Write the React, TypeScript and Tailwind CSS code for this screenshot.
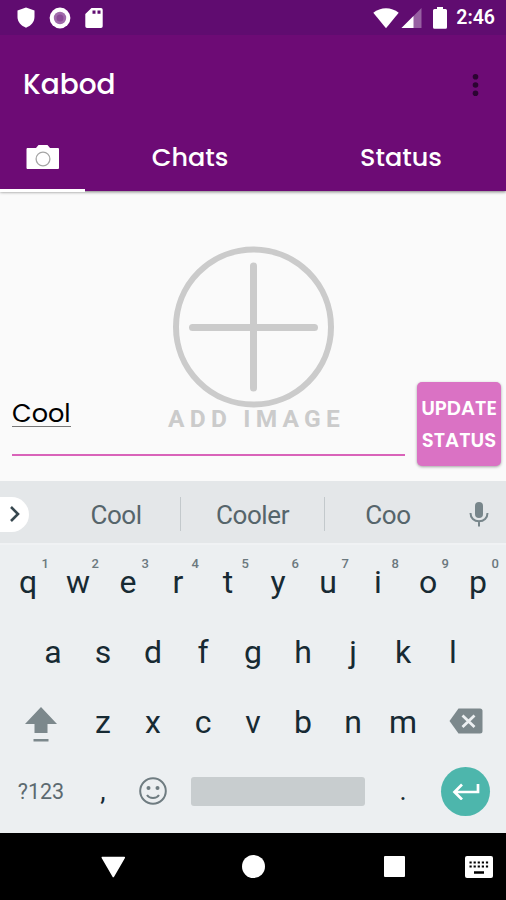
import React from "react";
import clsx from "clsx";

const TOP_ROW = ["q", "w", "e", "r", "t", "y", "u", "i", "o", "p"];
const HOME_ROW = ["a", "s", "d", "f", "g", "h", "j", "k", "l"];
const BOTTOM_ROW = ["z", "x", "c", "v", "b", "n", "m"];

function StatusBar() {
  return (
    <div className="flex h-[35px] items-center justify-between bg-[#600c70] pl-[16px] pr-[11px] text-white">
      <div className="flex items-center gap-[13px]">
        <svg width="20" height="22" viewBox="0 0 20 22" fill="currentColor">
          <path d="M10 .5 18.500 3.500V10c0 5-3.500 8.700-8.500 10.700C5 18.700 1.500 15 1.500 10V3.500z" />
        </svg>
        <svg width="22" height="22" viewBox="0 0 22 22">
          <circle cx="11" cy="11" r="10.4" fill="white" />
          <circle cx="11" cy="11" r="6.200" fill="#a06bab" />
          <circle cx="11" cy="11" r="3.500" fill="#8b4b97" />
        </svg>
        <svg className="ml-px" width="18" height="22" viewBox="0 0 18 22">
          <path d="M6.5 1H16a1.7 1.7 0 0 1 1.7 1.7v16.6A1.7 1.7 0 0 1 16 21H2a1.7 1.7 0 0 1-1.7-1.7V7z" fill="white" />
          <path d="M7.500 3.500h3v3.2h-3zM12.500 3.500h3v3.2h-3z" fill="#600c70" />
        </svg>
      </div>
      <div className="flex items-center">
        <svg width="26" height="22" viewBox="0 0 26 22" fill="currentColor">
          <path d="M.3 5.800C7.500-.3 18.500-.3 25.700 5.800L13 21.300z" />
        </svg>
        <svg className="ml-[2px]" width="21" height="22" viewBox="0 0 21 22" fill="currentColor">
          <path d="M20.500 1v20H.5z" opacity=".35" />
          <path d="M12.500 9v12H.5z" />
        </svg>
        <svg className="ml-[11px]" width="14" height="22" viewBox="0 0 14 22" fill="currentColor">
          <path d="M4 0h6v2h2.500A1.500 1.500 0 0 1 14 3.500v16.800a1.500 1.500 0 0 1-1.500 1.500h-11A1.500 1.500 0 0 1 0 20.300V3.500A1.500 1.500 0 0 1 1.500 2H4z" />
        </svg>
        <span className="ml-[9px] pt-[1px] font-[Roboto,sans-serif] text-[19.500px] font-semibold leading-none">2:46</span>
      </div>
    </div>
  );
}

function Header() {
  return (
    <header className="relative z-10 h-[191px] bg-[#6d0b75] text-white shadow-[0_1px_3px_rgba(0,0,0,0.5)]">
      <StatusBar />
      <div className="flex h-[99px] items-center justify-between pl-[23px] pr-[27px]">
        <h1 className="text-[28px] font-medium leading-none">Kabod</h1>
        <svg width="7" height="24" viewBox="0 0 7 24" fill="#2b0431">
          <circle cx="3.500" cy="3.700" r="2.800" />
          <circle cx="3.500" cy="12" r="2.800" />
          <circle cx="3.500" cy="20.300" r="2.800" />
        </svg>
      </div>
      <nav className="flex h-[58px] text-[25.500px] font-medium leading-none">
        <div className="flex w-[85px] flex-col items-center border-b-[3px] border-white pt-[10px]">
          <svg width="34" height="26" viewBox="0 0 34 26">
            <path d="M1 4h9l2.500-3h9L24 4h8a1 1 0 0 1 1 1v19a1 1 0 0 1-1 1H1.500a1 1 0 0 1-1-1V5z" fill="white" />
            <circle cx="17" cy="15" r="6.900" fill="none" stroke="#a5a5a5" strokeWidth="1.300" />
          </svg>
        </div>
        <div className="flex w-[210px] justify-center pt-[11px]">Chats</div>
        <div className="flex flex-1 justify-center pl-[1px] pt-[11px]">Status</div>
      </nav>
    </header>
  );
}

function StatusEditor() {
  return (
    <main className="relative h-[290px] bg-[#fafafa]">
      <div className="flex flex-col items-center pl-[1px] pt-[54px] text-[#cbcbcb]">
        <svg width="162" height="164" viewBox="0 0 162 164" fill="none" stroke="currentColor">
          <circle cx="80.500" cy="82" r="77.500" strokeWidth="6" />
          <path d="M80.500 21v122M19.500 82.500h122" strokeWidth="7" strokeLinecap="round" />
        </svg>
        <span className="ml-[6px] font-[Roboto,sans-serif] text-[24.500px] font-bold leading-[20px] tracking-[5.200px]">
          ADD IMAGE
        </span>
      </div>
      {/* composer sits over the placeholder image */}
      <div className="absolute inset-x-0 top-[191px] flex pl-[12px] pr-[5px]">
        <div className="flex h-[74px] w-[393px] items-start border-b-2 border-[#d963b9] pt-[18px]">
          <span className="border-b border-[#777] text-[25.500px] leading-[26px] text-black">Cool</span>
        </div>
        <button className="ml-[12px] h-[84px] w-[84px] rounded-[5px] bg-[#da72c4] text-[19.700px] font-semibold leading-[32px] text-white shadow-[0_1px_3px_rgba(0,0,0,0.35)]">
          <span className="block">UPDATE</span>
          <span className="block">STATUS</span>
        </button>
      </div>
    </main>
  );
}

function Suggestions() {
  return (
    <div className="flex h-[62px] items-center bg-[#e4e7e9] pt-[4px] text-[26px] text-[#56656b] shadow-[0_-1px_2px_rgba(0,0,0,0.04)]">
      <div className="flex h-[35px] w-[29px] items-center justify-center rounded-r-full bg-white">
        <svg width="12" height="18" viewBox="0 0 12 18" fill="none" stroke="#37474f" strokeWidth="2.600">
          <path d="m2 2 7 7-7 7" />
        </svg>
      </div>
      <span className="ml-[23px] w-[128px] pt-[2px] text-center tracking-[-0.500px]">Cool</span>
      <i className="h-[34px] w-px bg-[#c3c9cc]" />
      <span className="w-[143px] pt-[2px] text-center tracking-[-0.400px]">Cooler</span>
      <i className="h-[34px] w-px bg-[#c3c9cc]" />
      <span className="w-[126px] pt-[2px] text-center tracking-[-0.400px]">Coo</span>
      <svg className="ml-[18px]" width="20" height="26" viewBox="0 0 20 26">
        <rect x="6" y="1" width="8" height="16" rx="4" fill="#78868b" />
        <path d="M1.500 12c0 5 3.500 8.300 8.500 8.300s8.500-3.300 8.500-8.300M10 20v5.500" fill="none" stroke="#78868b" strokeWidth="2" />
      </svg>
    </div>
  );
}

function Key({ label, hint }: { label: string; hint?: string }) {
  const isPunctuation = label === "," || label === ".";

  return (
    <div className="relative flex w-[50px] items-center justify-center">
      <span className={clsx("leading-none", isPunctuation && "text-[27px]")}>{label}</span>
      {hint && (
        <span className="absolute right-[4px] top-[10px] text-[13px] font-medium leading-none text-[#6b787e]">
          {hint}
        </span>
      )}
    </div>
  );
}

function Keyboard() {
  return (
    <section className="font-[Roboto,sans-serif]">
      <Suggestions />
      <div className="h-[290px] border-t-2 border-[#f0f2f4] bg-[#eceff1] pt-[2px] text-[32px] text-[#172a33]">
        <div className="flex h-[70px] pl-[3px]">
          {TOP_ROW.map((letter, i) => (
            <Key key={letter} label={letter} hint={String((i + 1) % 10)} />
          ))}
        </div>
        <div className="flex h-[70px] pl-[28px]">
          {HOME_ROW.map((letter) => (
            <Key key={letter} label={letter} />
          ))}
        </div>
        <div className="flex h-[70px]">
          <div className="flex w-[78px] items-center pl-[25px] pt-[6px]">
            <svg width="32" height="36" viewBox="0 0 32 36" fill="#7c888c">
              <path d="M16 0 32 17h-9.500v9h-13v-9H0zM8.500 32h15v2.500h-15z" />
            </svg>
          </div>
          {BOTTOM_ROW.map((letter) => (
            <Key key={letter} label={letter} />
          ))}
          <div className="flex flex-1 items-center pb-[3px] pl-[21px]">
            <svg width="34" height="26" viewBox="0 0 34 26">
              <path d="M9.500.5H31A2.500 2.500 0 0 1 33.500 3v20a2.500 2.500 0 0 1-2.500 2.500H9.500L.5 13z" fill="#7c888c" />
              <path d="m13.500 7.500 12 11.500m0-11.500L13.500 19" stroke="#eceff1" strokeWidth="2.800" />
            </svg>
          </div>
        </div>
        <div className="flex h-[70px] items-center pb-[2px]">
          <span className="w-[78px] pl-[4px] pt-[2px] text-center text-[21.500px] text-[#5c6a70]">?123</span>
          <Key label="," />
          <div className="flex w-[50px] justify-center pb-px">
            <svg width="28" height="28" viewBox="0 0 28 28" fill="none" stroke="#6f7c81" strokeWidth="2">
              <circle cx="14" cy="14" r="12.800" />
              <path d="M8 18c2.500 4 9.500 4 12 0" />
              <circle cx="9.500" cy="11" r="2" fill="#6f7c81" stroke="none" />
              <circle cx="18.500" cy="11" r="2" fill="#6f7c81" stroke="none" />
            </svg>
          </div>
          <div className="ml-[13px] h-[29px] w-[174px] rounded-[3px] bg-[#c8cdcf]" />
          <div className="ml-[13px]">
            <Key label="." />
          </div>
          <div className="ml-[13px] flex size-[49px] items-center justify-center rounded-full bg-[#4db6ac]">
            <svg width="28" height="18" viewBox="0 0 28 18" fill="none" stroke="white" strokeWidth="2.700">
              <path d="M26 2v8H3M10 2.500 2.500 10l7.500 7.500" />
            </svg>
          </div>
        </div>
      </div>
    </section>
  );
}

function NavBar() {
  return (
    <footer className="flex h-[67px] items-center bg-black pl-[101px]">
      <svg width="25" height="22" viewBox="0 0 25 22" fill="white" stroke="white" strokeWidth="1.500" strokeLinejoin="round">
        <path d="M1.300 1.500h22L12.300 20.500z" />
      </svg>
      <div className="ml-[116px] size-[23px] rounded-full bg-white" />
      <div className="ml-[119px] size-[21px] rounded-[1px] bg-white" />
      <svg className="ml-[60px]" width="28" height="22" viewBox="0 0 28 22">
        <rect width="28" height="22" rx="2" fill="white" />
        <path d="M4.500 6.500h20M4.500 10.500h20" stroke="black" strokeWidth="2" strokeDasharray="2.200 1.900" />
        <path d="M9 16.500h10" stroke="black" strokeWidth="2.500" />
      </svg>
    </footer>
  );
}

export default function App() {
  return (
    <div className="h-[900px] w-[506px] overflow-hidden bg-[#fafafa] font-[Poppins,Inter,sans-serif] [font-feature-settings:'cv11']">
      <Header />
      <StatusEditor />
      <Keyboard />
      <NavBar />
    </div>
  );
}
